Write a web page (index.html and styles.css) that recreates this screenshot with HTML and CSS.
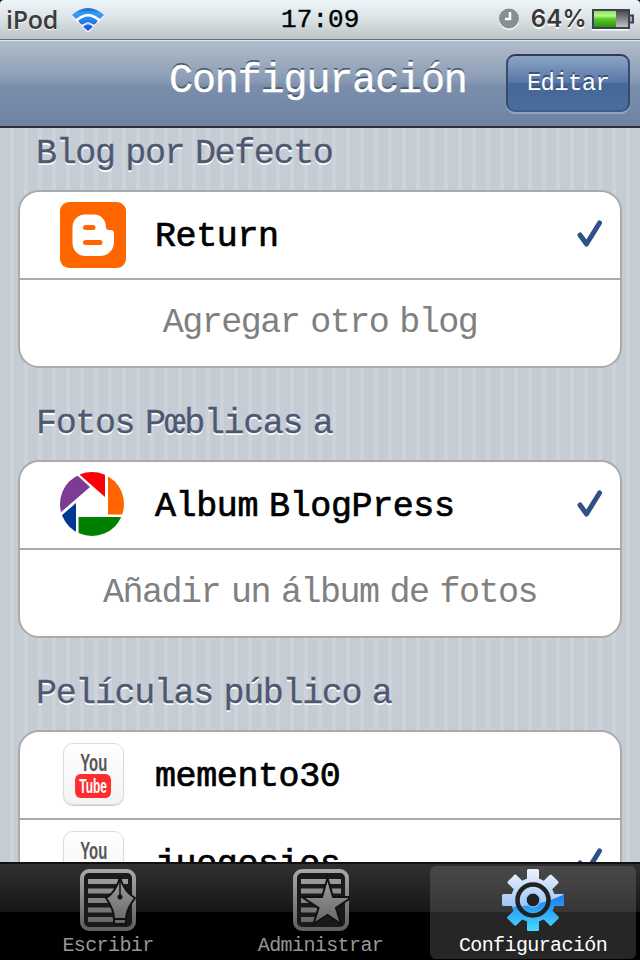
FILE: index.html
```html
<!DOCTYPE html>
<html lang="es">
<head>
    <meta charset="UTF-8">
    <meta name="viewport" content="width=device-width, initial-scale=1.0">
    <title>Configuración</title>
    <link rel="stylesheet" href="styles.css">
</head>
<body>
    <div class="screen">
        <header class="status">
            <div class="status-left">
                <span class="device">iPod</span>
                <svg class="wifi" width="34" height="26" viewBox="0 0 34 26">
                    <defs>
                        <linearGradient id="wifiFill" x1="0" y1="0" x2="0" y2="1">
                            <stop offset="0" stop-color="#1c62d2"/>
                            <stop offset=".25" stop-color="#38a0f0"/>
                            <stop offset="1" stop-color="#0a50e0"/>
                        </linearGradient>
                    </defs>
                    <path fill="#fff" d="M1 10Q17-5 33 10L27 17H7ZM9 18H25L17 27Z"/>
                    <path fill="url(#wifiFill)" d="M1 9Q17-5 33 9L29 13Q17 3 5 13ZM7 15Q17 6 27 15L23 19Q17 13.500 11 19ZM12 20.500Q17 16 22 20.500L17 25Z"/>
                </svg>
            </div>
            <div class="time">17:09</div>
            <div class="status-right">
                <svg width="22" height="24" viewBox="0 0 22 24">
                    <circle cx="11" cy="13" r="10" fill="#fff"/>
                    <circle cx="11" cy="11.500" r="10" fill="#84918f"/>
                    <path d="M12 5V12H7" fill="none" stroke="#fff" stroke-width="2.500"/>
                </svg>
                <span class="percent">64%</span>
                <svg class="battery" width="43" height="24" viewBox="0 0 43 24">
                    <defs>
                        <linearGradient id="charge" x1="0" y1="0" x2="0" y2="1">
                            <stop offset="0" stop-color="#8de05c"/>
                            <stop offset=".3" stop-color="#b6fa86"/>
                            <stop offset=".5" stop-color="#5cc62c"/>
                            <stop offset="1" stop-color="#2c9608"/>
                        </linearGradient>
                        <linearGradient id="empty" x1="0" y1="0" x2="0" y2="1">
                            <stop offset="0" stop-color="#444"/>
                            <stop offset="1" stop-color="#c8c8c8"/>
                        </linearGradient>
                    </defs>
                    <path d="M1 22.500H38" stroke="#fff" stroke-width="2"/>
                    <rect x="2" y="3" width="36" height="18" fill="url(#empty)" stroke="#3c4058" stroke-width="2"/>
                    <rect x="3" y="4" width="22" height="16" fill="url(#charge)"/>
                    <path d="M39 8.500H42V15.500H39" fill="#aaa" stroke="#3c4058" stroke-width="2"/>
                </svg>
            </div>
        </header>

        <nav class="navbar">
            <h1>Configuración</h1>
            <button type="button" class="edit">Editar</button>
        </nav>

        <main class="content">
            <section>
                <h2>Blog por Defecto</h2>
                <ul class="card">
                    <li class="row">
                        <svg class="icon" width="66" height="66" viewBox="0 0 66 66">
                            <rect width="66" height="66" rx="9" fill="#f60"/>
                            <path fill="#fff" d="M25 12.500H34C41 12.500 46 18 46 25C46 27.500 47 28 50 28Q54 28 54 31V40C54 48 48 54 40 54H25C18 54 12.500 48 12.500 41V25C12.500 18 18 12.500 25 12.500Z"/>
                            <path d="M25.500 25.500H33M25.500 40.500H40" stroke="#f60" stroke-width="5" stroke-linecap="round"/>
                        </svg>
                        <span class="name">Return</span>
                        <svg class="check" width="28" height="30" viewBox="0 0 28 30"><path d="M4 16L10.500 25L23.500 4"/></svg>
                    </li>
                    <li class="row add">Agregar otro blog</li>
                </ul>
            </section>

            <section>
                <h2>Fotos Pœblicas a</h2>
                <ul class="card">
                    <li class="row">
                        <svg class="icon" width="66" height="66" viewBox="0 0 66 66">
                            <defs><clipPath id="disc"><circle cx="32" cy="32" r="32"/></clipPath></defs>
                            <g clip-path="url(#disc)">
                                <path fill="#7c3c94" d="M0 41L30 15L18 4L0 0Z"/>
                                <path fill="#ff0008" d="M20 3L45 25V-2H20Z"/>
                                <path fill="#ff6400" d="M48 0V42.500H66V0Z"/>
                                <path fill="#008000" d="M18.500 45H64V66H18.500Z"/>
                                <path fill="#003890" d="M1 44L16 31V62H1Z"/>
                            </g>
                        </svg>
                        <span class="name">Album BlogPress</span>
                        <svg class="check" width="28" height="30" viewBox="0 0 28 30"><path d="M4 16L10.500 25L23.500 4"/></svg>
                    </li>
                    <li class="row add">Añadir un álbum de fotos</li>
                </ul>
            </section>

            <section>
                <h2>Películas público a</h2>
                <ul class="card">
                    <li class="row">
                        <span class="icon"><span class="youtube"><span class="you">You</span><span class="tube">Tube</span></span></span>
                        <span class="name">memento30</span>
                    </li>
                    <li class="row">
                        <span class="icon"><span class="youtube"><span class="you">You</span><span class="tube">Tube</span></span></span>
                        <span class="name">juegosios</span>
                        <svg class="check" width="28" height="30" viewBox="0 0 28 30"><path d="M4 16L10.500 25L23.500 4"/></svg>
                    </li>
                </ul>
            </section>
        </main>

        <footer class="tabs">
            <div class="tab">
                <svg width="60" height="64" viewBox="0 0 60 64">
                    <defs>
                        <linearGradient id="metal" gradientUnits="userSpaceOnUse" x1="0" y1="0" x2="0" y2="64">
                            <stop offset="0" stop-color="#aaa"/>
                            <stop offset="1" stop-color="#5c5c5c"/>
                        </linearGradient>
                    </defs>
                    <rect x="4" y="3" width="52" height="58" rx="7" fill="#1a1a1a" stroke="url(#metal)" stroke-width="4"/>
                    <path fill="url(#metal)" d="M10 11H50V16H10ZM10 20.500H37V25.500H10ZM10 30H31V35H10ZM10 39.500H34V44.500H10ZM10 49H36V54H10Z"/>
                    <path fill="url(#metal)" stroke="#111" stroke-width="2" d="M42 10C45 19 50 26 57 30C52 37 48 43 48 51H36C36 43 33 37 28 30C35 26 39 19 42 10ZM36 51H48V56H36Z"/>
                    <path d="M42 10V28" stroke="#111" stroke-width="1.500"/>
                    <circle cx="42" cy="29" r="2.500" fill="#111"/>
                </svg>
                <span>Escribir</span>
            </div>
            <div class="tab">
                <svg width="60" height="64" viewBox="0 0 60 64">
                    <rect x="4" y="3" width="52" height="58" rx="7" fill="#1a1a1a" stroke="url(#metal)" stroke-width="4"/>
                    <path fill="url(#metal)" d="M10 11H50V16H10ZM10 20.500H50V25.500H10ZM10 30H22V35H10ZM10 39.500H26V44.500H10ZM10 49H24V54H10Z"/>
                    <path fill="url(#metal)" stroke="#111" stroke-width="2" d="M36.500 10L42 29H58V31L45 40L50 56L36.500 47L22.500 56L27.500 40L11 29H31Z"/>
                </svg>
                <span>Administrar</span>
            </div>
            <div class="tab active">
                <svg width="64" height="64" viewBox="0 0 64 64">
                    <defs>
                        <linearGradient id="frost" x1="0" y1="0" x2="0" y2="1">
                            <stop offset="0" stop-color="#f0f4ff"/>
                            <stop offset="1" stop-color="#68a5e8"/>
                        </linearGradient>
                        <linearGradient id="blue" x1="0" y1="0" x2="0" y2="1">
                            <stop offset="0" stop-color="#1b78ed"/>
                            <stop offset="1" stop-color="#48dcff"/>
                        </linearGradient>
                        <clipPath id="gear">
                            <circle cx="32" cy="32" r="22"/>
                            <rect x="26" y="1" width="12" height="62" rx="1.500"/>
                            <rect x="26" y="1" width="12" height="62" rx="1.500" transform="rotate(45 32 32)"/>
                            <rect x="26" y="1" width="12" height="62" rx="1.500" transform="rotate(90 32 32)"/>
                            <rect x="26" y="1" width="12" height="62" rx="1.500" transform="rotate(135 32 32)"/>
                        </clipPath>
                    </defs>
                    <g clip-path="url(#gear)">
                        <rect width="64" height="64" fill="url(#frost)"/>
                        <path d="M0 39Q36 40 64 26V64H0Z" fill="url(#blue)"/>
                    </g>
                    <circle cx="32" cy="32" r="15.500" fill="none" stroke="#202226" stroke-width="4.500"/>
                    <circle cx="32" cy="32" r="6.500" fill="#222"/>
                    <circle cx="32" cy="32" r="7" fill="none" stroke="#8cc4ff" stroke-width="1"/>
                </svg>
                <span>Configuración</span>
            </div>
        </footer>
    </div>
</body>
</html>
```
FILE: styles.css
```css
* {
    box-sizing: border-box;
}

body {
    margin: 0;
    background-color: #000;
    font-family: "Liberation Mono", monospace;
}

.screen {
    width: 640px;
    height: 960px;
    display: flex;
    flex-direction: column;
    overflow: hidden;
}

.status {
    height: 40px;
    flex: none;
    display: grid;
    grid-template-columns: 1fr 80px 1fr;
    align-items: center;
    padding: 0 6px 1px;
    background: linear-gradient(#eef5f9, #dce4e7 45%, #bdc4c5);
    border-bottom: 1px solid #667273;
    border-radius: 4px 4px 0 0;
    line-height: 36px;
}

.status-left,
.status-right {
    display: flex;
    align-items: center;
}

.status-right {
    justify-content: flex-end;
}

.device {
    font-family: "Open Sans", sans-serif;
    font-size: 25px;
    font-weight: 600;
    letter-spacing: -0.300px;
    color: #3c3c3c;
    text-shadow: 0 1px #fff;
    width: 65px;
}

.time {
    padding: 1px 0 0 1px;
    font-size: 26px;
    letter-spacing: 0.100px;
    white-space: nowrap;
    -webkit-text-stroke: 0.400px #000;
}

.percent {
    font-family: Inter, sans-serif;
    font-size: 24px;
    font-weight: 600;
    letter-spacing: 0.300px;
    color: #383838;
    text-shadow: 0 2px #fff;
    margin: 0 4px 0 11px;
}

.navbar {
    height: 88px;
    flex: none;
    display: grid;
    grid-template-columns: 506px 124px;
    align-items: start;
    background: linear-gradient(#b3becc, #8799b3 48%, #7b8fac 52%, #6e83a3);
    border-top: 1px solid #e1e6ea;
    border-bottom: 2px solid #2d3036;
}

h1 {
    margin: 0;
    padding-left: 169px;
    font-size: 40px;
    font-weight: 400;
    letter-spacing: -1.100px;
    line-height: 82px;
    color: #fff;
    text-shadow: 0 -2px #4d596c;
    white-space: nowrap;
    -webkit-text-stroke: 0.400px #fff;
}

.edit {
    height: 58px;
    margin: 13px 0 0;
    padding: 0;
    border: 2px solid #314460;
    border-color: #303d52 #364c6e #405b85;
    border-radius: 9px;
    background: linear-gradient(#8ba4c5, #5877a7 50%, #456797 50%, #4a6d9e);
    box-shadow: 0 2px rgba(255, 255, 255, 0.25);
    color: #fff;
    font: inherit;
    font-size: 24px;
    letter-spacing: -0.700px;
    text-shadow: 0 -2px #3b5172;
}

.content {
    flex: 1;
    min-height: 0;
    overflow: hidden;
    background: linear-gradient(90deg, #c5ccd4 10px, transparent 10px, transparent 630px, #c5ccd4 630px),
        repeating-linear-gradient(90deg, #c5ccd4 0 10px, #ccd3da 10px 14px);
}

section {
    height: 270px;
}

h2 {
    margin: 0;
    height: 62px;
    padding-left: 36px;
    font-size: 35px;
    font-weight: 400;
    line-height: 53px;
    letter-spacing: -1.350px;
    word-spacing: -9px;
    color: #4d5872;
    text-shadow: 0 2px #fff;
    white-space: nowrap;
    -webkit-text-stroke: 0.300px #4d5872;
}

.card {
    width: 604px;
    margin: 0 auto;
    padding: 0;
    list-style: none;
    background-color: #fff;
    border: 2px solid #aaa;
    border-radius: 21px;
}

.row {
    height: 86px;
    display: flex;
    align-items: center;
    padding: 0 16px 0 40px;
}

.row + .row {
    height: 88px;
    border-top: 2px solid #aaa;
}

.icon {
    width: 66px;
    height: 66px;
    flex: none;
}

.name {
    margin-left: 29px;
    padding-top: 4px;
    font-size: 35px;
    letter-spacing: -0.400px;
    word-spacing: -9.500px;
    line-height: 82px;
    white-space: nowrap;
    -webkit-text-stroke: 0.700px #000;
}

.check {
    margin: 0 0 3px auto;
    fill: none;
    stroke: #305088;
    stroke-width: 5;
    stroke-linecap: round;
    stroke-linejoin: round;
}

.row.add {
    justify-content: center;
    padding: 0;
    color: #808080;
    font-size: 35px;
    letter-spacing: -1.500px;
    word-spacing: -8.500px;
    white-space: nowrap;
}

.youtube {
    display: flex;
    flex-direction: column;
    align-items: center;
    width: 61px;
    height: 62px;
    margin: 1px 3px;
    padding-top: 8px;
    border: 1px solid #dcdcdc;
    border-radius: 10px;
    background: linear-gradient(#fff, #fafafa 40%, #f2f3f3);
    box-shadow: 0 1px 1px #ccc;
    font-family: "Liberation Sans", sans-serif;
    font-weight: 700;
}

.you {
    font-size: 24px;
    line-height: 22px;
    color: #555;
    transform: scaleX(0.62);
}

.tube {
    height: 24px;
    padding: 0 7px;
    border-radius: 9px / 6px;
    background-color: #ff2c30;
    color: #fff;
    font-size: 20px;
    line-height: 25px;
    transform: scaleX(0.6);
}

.tabs {
    height: 98px;
    flex: none;
    display: grid;
    grid-template-columns: repeat(3, 206px);
    column-gap: 6.500px;
    padding: 2px 4px 4px 5px;
    background: linear-gradient(#303030, #161616 50%, #000 50%);
    border-top: 2px solid #111;
}

.tab {
    display: flex;
    flex-direction: column;
    align-items: center;
    padding-top: 2px;
    color: #969696;
    font-size: 20px;
    letter-spacing: -0.600px;
    line-height: 27px;
}

.tab.active {
    color: #fff;
    border-radius: 6px;
    background: linear-gradient(#484848, #363636 50%, #262626 50%);
}
```
